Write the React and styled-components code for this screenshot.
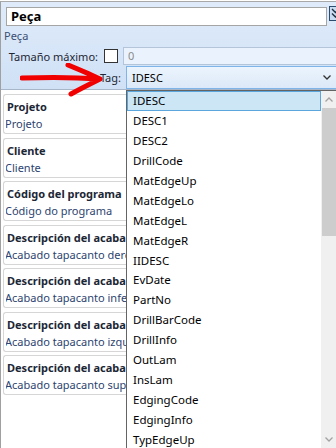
import React from "react";
import styled, { createGlobalStyle } from "styled-components";

const cards = [
  { id: 1, title: "Projeto", value: "Projeto" },
  { id: 2, title: "Cliente", value: "Cliente" },
  { id: 3, title: "Código del programa", value: "Código do programa" },
  { id: 4, title: "Descripción del acabado derecho", value: "Acabado tapacanto derecho" },
  { id: 5, title: "Descripción del acabado inferior", value: "Acabado tapacanto inferior" },
  { id: 6, title: "Descripción del acabado izquierdo", value: "Acabado tapacanto izquierdo" },
  { id: 7, title: "Descripción del acabado superior", value: "Acabado tapacanto superior" },
];

const tags = [
  "IDESC",
  "DESC1",
  "DESC2",
  "DrillCode",
  "MatEdgeUp",
  "MatEdgeLo",
  "MatEdgeL",
  "MatEdgeR",
  "IIDESC",
  "EvDate",
  "PartNo",
  "DrillBarCode",
  "DrillInfo",
  "OutLam",
  "InsLam",
  "EdgingCode",
  "EdgingInfo",
  "TypEdgeUp",
];

const GlobalStyle = createGlobalStyle`
  html, body {
    margin: 0;
    padding: 0;
    background: #ffffff;
  }
  * {
    box-sizing: border-box;
  }
`;

const Chevron = ({ up, color = "#333" }) => (
  <svg width="8" height="5" viewBox="0 0 8 5">
    <path
      d={up ? "M0.5 4.5 L4 1 L7.5 4.5" : "M0.5 0.5 L4 4 L7.5 0.5"}
      fill="none"
      stroke={color}
      strokeWidth="1.3"
    />
  </svg>
);

const App = () => {
  return (
    <>
      <GlobalStyle />
      <Window>
        <Header>
          <TitleRow>
            <TitleInput>Peça</TitleInput>
            <CollapseButton>
              <svg width="9" height="12" viewBox="0 0 9 12">
                <path d="M1 1 L4.5 4.5 L8 1 M1 5.5 L4.5 9 L8 5.5" fill="none" stroke="#1f2f40" strokeWidth="1.4" />
              </svg>
            </CollapseButton>
          </TitleRow>
          <SectionLabel>Peça</SectionLabel>
          <FieldRow>
            <FieldLabel $width={98}>Tamaño máximo:</FieldLabel>
            <Checkbox />
            <NumberInput>0</NumberInput>
          </FieldRow>
          <FieldRow $tight>
            <FieldLabel $width={121}>Tag:</FieldLabel>
            <Select>
              <span>IDESC</span>
              <Chevron />
            </Select>
          </FieldRow>
        </Header>

        <CardList>
          {cards.map((card) => (
            <Card key={card.id}>
              <CardText>
                <CardTitle>{card.title}</CardTitle>
                <CardValue>{card.value}</CardValue>
              </CardText>
            </Card>
          ))}
        </CardList>

        <Arrow width="84" height="34" viewBox="0 0 84 34">
          <path
            d="M2 15 C 30 14, 60 14.5, 80 16 M48 2 C 60 7, 72 12, 80 16 C 70 21, 60 26, 51 31"
            fill="none"
            stroke="#f00000"
            strokeWidth="5"
            strokeLinecap="round"
            strokeLinejoin="round"
          />
        </Arrow>

        <DropList>
          <Options>
            {tags.map((tag, i) => (
              <Option key={tag} $selected={i === 0}>
                {tag}
              </Option>
            ))}
          </Options>
          <ScrollBar>
            <ScrollArrow>
              <Chevron up color="#a3a3a3" />
            </ScrollArrow>
            <Track>
              <Thumb />
            </Track>
            <ScrollArrow>
              <Chevron color="#a3a3a3" />
            </ScrollArrow>
          </ScrollBar>
        </DropList>
      </Window>
    </>
  );
};

export default App;

const font = `"Segoe UI", "Noto Sans", "Open Sans", sans-serif`;

const Window = styled.div`
  position: relative;
  width: 336px;
  height: 448px;
  border-left: 1px solid #a0a0a0;
  border-top: 1px solid #a8a8a8;
  border-bottom: 1px solid #a0a0a0;
  margin-top: 1px;
  font-family: ${font};
  font-size: 11px;
  overflow: hidden;
  display: flex;
  flex-direction: column;
  background: #ffffff;
`;

const Header = styled.div`
  background: linear-gradient(#dfebfa, #d0e1f6);
  border-bottom: 1px solid #a7b6c8;
  height: 88px;
  flex-shrink: 0;
  display: flex;
  flex-direction: column;
`;

const TitleRow = styled.div`
  display: flex;
  align-items: flex-start;
  padding: 5px 0 0 5px;
  gap: 2px;
`;

const TitleInput = styled.div`
  width: 321px;
  height: 19px;
  flex-shrink: 0;
  background: #ffffff;
  border: 1px solid #a5a5a5;
  font-weight: 700;
  font-size: 13px;
  line-height: 17px;
  padding-left: 4px;
  color: #000000;
`;

const CollapseButton = styled.div`
  width: 12px;
  height: 15px;
  margin-top: -1px;
  flex-shrink: 0;
  border: 1px solid #2c4c6e;
  background: #c9dcf2;
  display: flex;
  align-items: center;
  padding-left: 1px;
`;

const SectionLabel = styled.div`
  color: #3b4f74;
  padding-left: 3px;
  margin-top: 2px;
  line-height: 16px;
`;

const FieldRow = styled.div`
  display: flex;
  align-items: center;
  margin-top: ${(props) => (props.$tight ? "1px" : "3px")};
`;

const FieldLabel = styled.div`
  width: ${(props) => props.$width}px;
  text-align: right;
  white-space: nowrap;
  color: #1e2633;
  flex-shrink: 0;
  padding-right: 1px;
`;

const Checkbox = styled.div`
  width: 14px;
  height: 14px;
  margin-left: 5px;
  background: #ffffff;
  border: 1px solid #333333;
  flex-shrink: 0;
`;

const NumberInput = styled.div`
  flex: 1;
  height: 18px;
  margin-left: 5px;
  background: #eaf3fd;
  border: 1px solid #b4c5da;
  border-right: none;
  color: #8a8a8a;
  line-height: 16px;
  padding-left: 4px;
`;

const Select = styled.div`
  flex: 1;
  height: 23px;
  margin-left: 4px;
  background: linear-gradient(#ecf4fd, #dce9f8);
  border: 1px solid #7fb4e8;
  border-right: none;
  display: flex;
  align-items: center;
  justify-content: space-between;
  padding: 0 5px 0 5px;
  color: #000000;
`;

const CardList = styled.div`
  display: flex;
  flex-direction: column;
  gap: 3.5px;
  padding: 4px 0 0 2px;
`;

const Card = styled.div`
  height: 40px;
  border: 1px solid #d6d6d6;
  border-right: none;
  border-radius: 3px 0 0 3px;
  padding: 3px 0 0 2px;
`;

const CardText = styled.div`
  width: 120px;
  white-space: nowrap;
  overflow: hidden;
`;

const CardTitle = styled.div`
  font-weight: 700;
  color: #1c2736;
  line-height: 17px;
  padding-left: 1px;
`;

const CardValue = styled.div`
  color: #2d4470;
  line-height: 17px;
  margin-left: -1px;
`;

const Arrow = styled.svg`
  position: absolute;
  left: 19px;
  top: 61px;
`;

const DropList = styled.div`
  position: absolute;
  left: 125px;
  top: 88px;
  width: 211px;
  height: 359px;
  background: #ffffff;
  border: 1px solid #646464;
  border-right: none;
  display: flex;
`;

const Options = styled.div`
  flex: 1;
  display: flex;
  flex-direction: column;
`;

const Option = styled.div`
  height: 19.9px;
  flex-shrink: 0;
  display: flex;
  align-items: center;
  padding-left: 5px;
  font-size: 11.5px;
  color: #000000;
  background: ${(props) => (props.$selected ? "#cce6f6" : "transparent")};
  border: 1px solid ${(props) => (props.$selected ? "#5aa6dd" : "transparent")};
`;

const ScrollBar = styled.div`
  width: 16px;
  display: flex;
  flex-direction: column;
  background: #f0f0f0;
`;

const ScrollArrow = styled.div`
  height: 17px;
  display: flex;
  align-items: center;
  justify-content: center;
  flex-shrink: 0;
`;

const Track = styled.div`
  flex: 1;
  padding: 0 1px;
`;

const Thumb = styled.div`
  height: 128px;
  background: #cdcdcd;
`;
